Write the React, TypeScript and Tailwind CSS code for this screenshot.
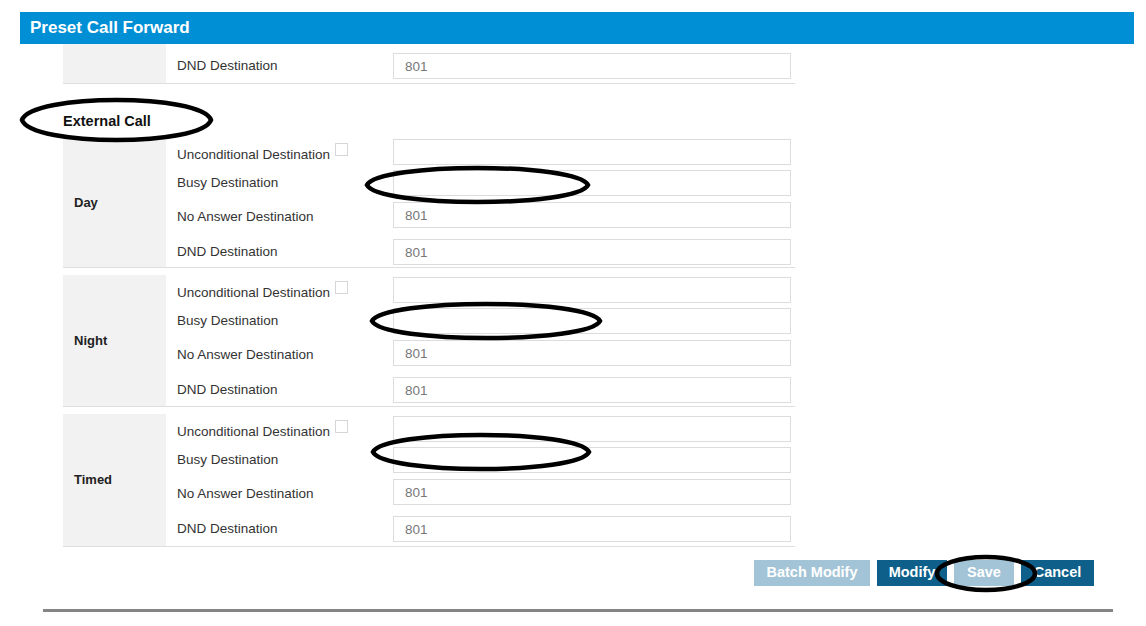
import React from 'react';

type RowSpec = {
  label: string;
  value: string;
  check?: boolean;
};

const rowClasses: Record<number, { h: string; pt: string }> = {
  0: { h: 'h-[31px]', pt: 'pt-[9px]' },
  1: { h: 'h-[32px]', pt: 'pt-[6px]' },
  2: { h: 'h-[37px]', pt: 'pt-[8px]' },
  3: { h: 'h-[29px]', pt: 'pt-[6px]' },
};

const rows: RowSpec[] = [
  { label: 'Unconditional Destination', value: '', check: true },
  { label: 'Busy Destination', value: '' },
  { label: 'No Answer Destination', value: '801' },
  { label: 'DND Destination', value: '801' },
];

const Field = ({ value }: { value: string }) => (
  <input
    readOnly
    value={value}
    className="mt-[1px] w-[398px] h-[26px] border border-[#dcdcdc] bg-white pl-[11px] text-[13.5px] text-[#777777] outline-none"
  />
);

const Section = ({ name, pad = '' }: { name: string; pad?: string }) => (
  <div className="flex border-b border-[#dedede]">
    <div className="w-[103px] bg-[#f2f2f2] flex items-center pl-[11px] text-[13px] font-bold text-[#222]">
      {name}
    </div>
    <div className={`flex flex-col ${pad}`}>
      {rows.map((r, i) => (
        <div key={r.label} className={`flex ${rowClasses[i].h}`}>
          <div className={`w-[227px] pl-[11px] flex items-start leading-[16px] ${rowClasses[i].pt}`}>
            <span>{r.label}</span>
            {r.check && (
              <span className="ml-[5px] -mt-[4px] w-[13px] h-[13px] border border-[#d6d6d6] bg-white"></span>
            )}
          </div>
          <Field value={r.value} />
        </div>
      ))}
    </div>
  </div>
);

// hand drawn marks on top of the screenshot
const lens = (x0: number, x1: number, cy: number, ry: number) => {
  const w = x1 - x0;
  const k = ry / 0.75;
  const a = w * 0.05;
  return `M${x0},${cy} C${x0 + a},${cy - k} ${x1 - a},${cy - k} ${x1},${cy} C${x1 - a},${cy + k} ${x0 + a},${cy + k} ${x0},${cy} Z`;
};

const App: React.FC = () => {
  return (
    <div className="relative w-[1146px] h-[626px] overflow-hidden bg-white font-['Liberation_Sans',Arial,sans-serif] text-[13.5px] text-[#333333]">
      <div className="pt-[12px] pl-[20px]">
        <div className="w-[1114px] h-[32px] bg-[#008fd5] flex items-center pl-[10px] text-white font-bold text-[17px]">
          Preset Call Forward
        </div>
      </div>

      <div className="ml-[63px] w-[732px]">
        <div className="flex h-[40px] border-b border-[#dedede]">
          <div className="w-[103px] bg-[#f2f2f2]"></div>
          <div className="w-[227px] pl-[11px] pt-[14px] leading-[16px]">DND Destination</div>
          <input
            readOnly
            value="801"
            className="mt-[9px] w-[398px] h-[26px] border border-[#dcdcdc] bg-white pl-[11px] text-[13.5px] text-[#777777] outline-none"
          />
        </div>

        <div className="mt-[29px] mb-[9px] h-[16px] leading-[16px] font-bold text-[14.5px] text-[#111]">
          External Call
        </div>

        <div className="flex flex-col gap-[7px]">
          <Section name="Day" />
          <Section name="Night" pad="pt-[1px] pb-[1px]" />
          <Section name="Timed" pad="pt-[1px] pb-[2px]" />
        </div>
      </div>

      <div className="w-[1094px] mt-[13px] flex justify-end gap-[7px] text-white font-bold text-[14.5px]">
        <button className="h-[26px] w-[116px] bg-[#a3c4d6]">Batch Modify</button>
        <button className="h-[26px] w-[70px] bg-[#0e5f8a]">Modify</button>
        <button className="h-[26px] w-[60px] bg-[#a3c4d6]">Save</button>
        <button className="h-[26px] w-[73px] bg-[#0e5f8a]">Cancel</button>
      </div>

      <div className="ml-[43px] mt-[23px] w-[1070px] h-[3px] bg-[#858585]"></div>

      <svg className="absolute inset-0 pointer-events-none" width="1146" height="626" viewBox="0 0 1146 626">
        <g fill="none" stroke="#000" strokeWidth="4.5">
          <path d={lens(22, 211, 120, 20)} />
          <path d={lens(367, 588, 185, 17)} />
          <path d={lens(372, 600, 321, 17)} />
          <path d={lens(373, 589, 452, 17)} />
          <ellipse cx="986" cy="573.5" rx="49" ry="16.5" />
        </g>
      </svg>
    </div>
  );
};

export default App;
